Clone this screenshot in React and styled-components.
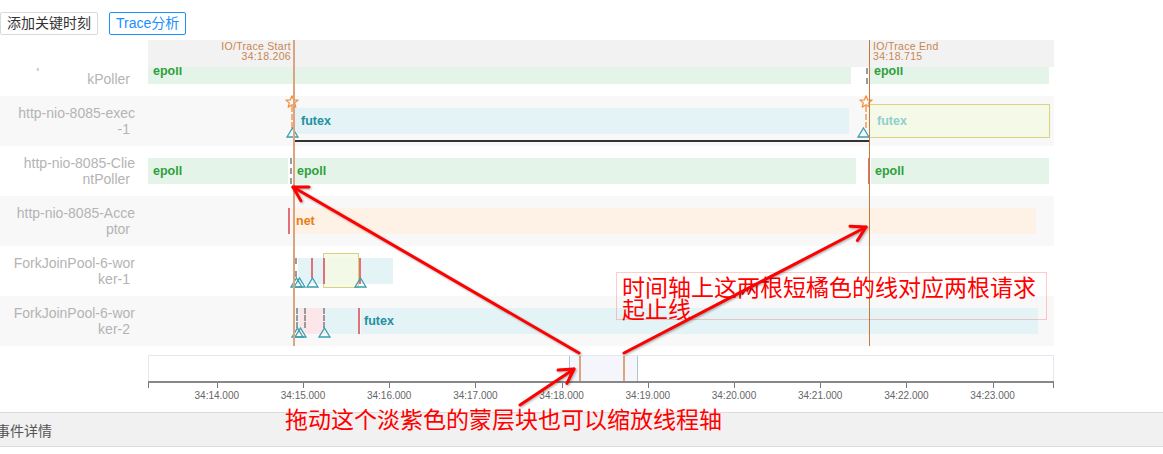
import React from "react";
import styled, { createGlobalStyle } from "styled-components";

const PLOT_X = 148;
const SEC_PX = 86.2;
const T14_X = 216.8; // x of 34:14.000

const GlobalStyle = createGlobalStyle`
  body {
    margin: 0;
    background: #fff;
    font-family: "Liberation Sans", "Noto Sans CJK SC", sans-serif;
  }
`;

const Page = styled.div`
  position: relative;
  width: 1163px;
  height: 454px;
  overflow: hidden;
`;

const Toolbar = styled.div`
  display: flex;
  gap: 11px;
  padding: 12px 0 5px;
`;

const ToolButton = styled.button`
  height: 23px;
  padding: 0 6px;
  border: 1px solid ${(p) => (p.$primary ? "#1890ff" : "#d9d9d9")};
  border-radius: 2px;
  background: #fff;
  color: ${(p) => (p.$primary ? "#1890ff" : "#333")};
  font-family: inherit;
  font-size: 14px;
  line-height: 21px;
`;

const Chart = styled.div`
  position: relative;
  height: 306px;
  overflow: hidden;
`;

const ChartHeader = styled.div`
  position: absolute;
  top: 0;
  left: 0;
  z-index: 2;
  display: flex;
  align-items: flex-start;
`;

const HeaderCorner = styled.div`
  width: 148px;
  height: 28px;
  background: #fff;
`;

const HeaderBand = styled.div`
  width: 906px;
  height: 27px;
  background: #f2f2f2;
`;

const RowList = styled.div`
  padding-top: 6px;
`;

const Row = styled.div`
  display: flex;
  width: 1054px;
  height: 50px;
  background: ${(p) => (p.$striped ? "#f8f8f8" : "#fff")};
`;

const RowLabel = styled.div`
  width: 148px;
  box-sizing: border-box;
  padding-right: 13px;
  display: flex;
  flex-direction: column;
  justify-content: center;
  align-items: flex-end;
  font-size: 14px;
  line-height: 16px;
  color: #b4b4b4;
  white-space: nowrap;
`;

const LabelLine = styled.span`
  padding-right: ${(p) => (p.$tail ? "5px" : "0")};
`;

const Track = styled.div`
  position: relative;
  flex: 1;
`;

const tones = {
  green: { bg: "#e5f4e9", fg: "#2f9f3d" },
  cyan: { bg: "#e4f3f5", fg: "#22909f" },
  peach: { bg: "#fef1e6", fg: "#ea7d12" },
  pink: { bg: "#fde6e9", fg: "#e06070" },
};

const Bar = styled.div`
  position: absolute;
  top: 12px;
  height: 26px;
  box-sizing: border-box;
  padding-left: ${(p) => p.$pad ?? 5}px;
  background: ${(p) => tones[p.$tone].bg};
  color: ${(p) => tones[p.$tone].fg};
  font-size: 12.5px;
  font-weight: bold;
  line-height: 26px;
  white-space: nowrap;
  overflow: hidden;
`;

const HighlightBox = styled.div`
  position: absolute;
  box-sizing: border-box;
  border: 1.5px solid #dbd27c;
  background: rgba(244, 249, 228, 0.85);
  color: #8fcfcf;
  font-size: 12.5px;
  font-weight: bold;
  padding-left: 7px;
  display: flex;
  align-items: center;
`;

const DashLine = styled.div`
  position: absolute;
  width: 0;
  border-left: 2px dashed ${(p) => (p.$tone === "orange" ? "#f4b17c" : "#9a9a9a")};
`;

const RedMark = styled.div`
  position: absolute;
  width: 2px;
  background: #e2707b;
`;

const SpanLine = styled.div`
  position: absolute;
  top: 44px;
  height: 2px;
  background: #333;
`;

const GlyphSvg = styled.svg`
  position: absolute;
  overflow: visible;
`;

const TraceLine = styled.div`
  position: absolute;
  top: 0;
  bottom: 0;
  z-index: 3;
  width: ${(p) => (p.$end ? "1.5px" : "2px")};
  background: ${(p) => (p.$end ? "#c8773d" : "#dca47f")};
`;

const TraceLabel = styled.div`
  position: absolute;
  top: 1px;
  z-index: 3;
  font-size: 10.5px;
  line-height: 10px;
  letter-spacing: 0.3px;
  color: #c98550;
  text-align: ${(p) => (p.$end ? "left" : "right")};
  white-space: nowrap;
`;

const BrushArea = styled.div`
  position: relative;
  margin: 9px 0 0 ${PLOT_X}px;
  width: 906px;
  height: 26px;
  box-sizing: border-box;
  border: 1px solid #e4e8f1;
  border-bottom: none;
`;

const BrushSelection = styled.div`
  position: absolute;
  top: 0;
  bottom: 0;
  box-sizing: border-box;
  background: #f4f6fc;
  border-left: 1px solid #b3c1d8;
  border-right: 1px solid #b3c1d8;
`;

const BrushMark = styled.div`
  position: absolute;
  top: 0;
  bottom: 0;
  width: 2px;
  background: #dca47f;
`;

const Axis = styled.div`
  position: relative;
  margin-left: ${PLOT_X}px;
  width: 906px;
  height: 22px;
  border-top: 2px solid #888;
`;

const Tick = styled.div`
  position: absolute;
  top: 0;
  width: 1px;
  height: 5px;
  background: #777;
`;

const TickLabel = styled.div`
  position: absolute;
  top: 7px;
  transform: translateX(-50%);
  font-size: 10px;
  color: #666;
  white-space: nowrap;
`;

const DetailBar = styled.div`
  margin-top: 7px;
  height: 35px;
  box-sizing: border-box;
  border-top: 1px solid #dcdcdc;
  border-bottom: 1px solid #dcdcdc;
  background: #f1f1f1;
  display: flex;
  align-items: center;
  text-indent: -4px;
  font-size: 14px;
  color: #555;
`;

const ArrowLayer = styled.svg`
  position: absolute;
  top: 0;
  left: 0;
  z-index: 10;
  pointer-events: none;
  filter: drop-shadow(1px 1px 1px rgba(0, 0, 0, 0.35));
`;

const Callout = styled.div`
  position: absolute;
  z-index: 10;
  left: 616px;
  top: 272px;
  width: 431px;
  height: 48px;
  box-sizing: border-box;
  padding: 2px 5px;
  border: 1px solid rgba(255, 0, 0, 0.2);
  color: #ff0000;
  font-family: "Noto Sans CJK SC", sans-serif;
  font-size: 23px;
  line-height: 22px;
`;

const Note = styled.div`
  position: absolute;
  z-index: 10;
  left: 285px;
  top: 405px;
  color: #ff0000;
  font-family: "Noto Sans CJK SC", sans-serif;
  font-size: 23px;
  line-height: 26px;
  white-space: nowrap;
`;

const px = (x) => x - PLOT_X;

const Triangle = ({ x }) => (
  <GlyphSvg width="13" height="11" style={{ left: px(x) - 6.5, top: 31 }}>
    <polygon points="6.5,1 12,10 1,10" fill="none" stroke="#3a9db0" strokeWidth="1.3" />
  </GlyphSvg>
);

const Star = ({ x }) => (
  <GlyphSvg width="14" height="13" style={{ left: px(x) - 7, top: -1 }}>
    <polygon
      points="7,0.8 8.7,4.9 13.1,5.1 9.7,7.9 10.8,12.2 7,9.8 3.2,12.2 4.3,7.9 0.9,5.1 5.3,4.9"
      fill="none"
      stroke="#f08d35"
      strokeWidth="1.2"
      strokeLinejoin="round"
    />
  </GlyphSvg>
);

const bar = (x1, x2, tone, text, pad) => ({ kind: "bar", x1, x2, tone, text, pad });
const dash = (x, tone = "gray", top = 12, bottom = 38) => ({ kind: "dash", x, tone, top, bottom });
const red = (x, top = 12, bottom = 38) => ({ kind: "red", x, top, bottom });
const tri = (x) => ({ kind: "tri", x });
const star = (x) => ({ kind: "star", x });

const rows = [
  {
    lines: ["http-nio-8085-Bloc", "kPoller"],
    items: [bar(148, 851, "green", "epoll"), dash(867), bar(870, 1049, "green", "epoll", 4)],
  },
  {
    lines: ["http-nio-8085-exec", "-1"],
    striped: true,
    items: [
      bar(295, 849, "cyan", "futex", 6),
      { kind: "span", x1: 293, x2: 869 },
      dash(292, "orange", 10, 32),
      star(292),
      tri(292),
      dash(866, "orange", 10, 32),
      star(866),
      tri(863),
      { kind: "box", x1: 869, x2: 1050, top: 8, bottom: 42, text: "futex" },
    ],
  },
  {
    lines: ["http-nio-8085-Clie", "ntPoller"],
    items: [
      bar(148, 288, "green", "epoll"),
      dash(291),
      bar(293, 856, "green", "epoll", 4),
      bar(871, 1049, "green", "epoll", 4),
      red(869),
    ],
  },
  {
    lines: ["http-nio-8085-Acce", "ptor"],
    striped: true,
    items: [red(289), bar(292, 1036, "peach", "net", 4)],
  },
  {
    lines: ["ForkJoinPool-6-wor", "ker-1"],
    items: [
      bar(298, 393, "cyan"),
      { kind: "box", x1: 323, x2: 359, top: 7, bottom: 42 },
      dash(296, "gray", 12, 31),
      red(312, 12, 32),
      red(323.5),
      red(359.5),
      tri(296),
      tri(299),
      tri(312),
      tri(360),
    ],
  },
  {
    lines: ["ForkJoinPool-6-wor", "ker-2"],
    striped: true,
    items: [
      bar(297, 300, "cyan"),
      bar(300, 325, "pink"),
      bar(325, 359, "cyan"),
      bar(361, 1038, "cyan", "futex", 3),
      dash(297, "gray", 12, 32),
      dash(305, "gray", 12, 32),
      dash(324, "gray", 12, 32),
      red(359),
      tri(297),
      tri(300),
      tri(324),
    ],
  },
];

const TrackItem = ({ item }) => {
  switch (item.kind) {
    case "bar":
      return (
        <Bar $tone={item.tone} $pad={item.pad} style={{ left: px(item.x1), width: item.x2 - item.x1 }}>
          {item.text}
        </Bar>
      );
    case "box":
      return (
        <HighlightBox
          style={{ left: px(item.x1), width: item.x2 - item.x1, top: item.top, height: item.bottom - item.top }}
        >
          {item.text}
        </HighlightBox>
      );
    case "dash":
      return (
        <DashLine $tone={item.tone} style={{ left: px(item.x) - 1, top: item.top, height: item.bottom - item.top }} />
      );
    case "red":
      return <RedMark style={{ left: px(item.x) - 1, top: item.top, height: item.bottom - item.top }} />;
    case "span":
      return <SpanLine style={{ left: px(item.x1), width: item.x2 - item.x1 }} />;
    case "tri":
      return <Triangle x={item.x} />;
    case "star":
      return <Star x={item.x} />;
    default:
      return null;
  }
};

const ticks = [14, 15, 16, 17, 18, 19, 20, 21, 22, 23];
const tickX = (s) => T14_X + (s - 14) * SEC_PX - PLOT_X;

const arrows = [
  { from: [579, 353], to: [293, 187] },
  { from: [624, 353], to: [866, 227] },
  { from: [520, 405], to: [574, 369] },
];

const Arrow = ({ from, to }) => {
  const ang = Math.atan2(to[1] - from[1], to[0] - from[0]);
  const len = 16;
  const spread = Math.PI / 6;
  const a1 = [to[0] - len * Math.cos(ang - spread), to[1] - len * Math.sin(ang - spread)];
  const a2 = [to[0] - len * Math.cos(ang + spread), to[1] - len * Math.sin(ang + spread)];
  return (
    <g stroke="#ff0000" strokeWidth="3" strokeLinecap="round" strokeLinejoin="round" fill="none">
      <line x1={from[0]} y1={from[1]} x2={to[0]} y2={to[1]} />
      <polyline points={`${a1[0]},${a1[1]} ${to[0]},${to[1]} ${a2[0]},${a2[1]}`} />
    </g>
  );
};

const App = () => {
  return (
    <Page>
      <GlobalStyle />
      <Toolbar>
        <ToolButton>添加关键时刻</ToolButton>
        <ToolButton $primary>Trace分析</ToolButton>
      </Toolbar>

      <Chart>
        <ChartHeader>
          <HeaderCorner />
          <HeaderBand />
        </ChartHeader>
        <TraceLabel style={{ right: 1163 - 291 }}>
          IO/Trace Start
          <br />
          34:18.206
        </TraceLabel>
        <TraceLabel $end style={{ left: 873 }}>
          IO/Trace End
          <br />
          34:18.715
        </TraceLabel>
        <TraceLine style={{ left: 292.5 }} />
        <TraceLine $end style={{ left: 868.5 }} />

        <RowList>
          {rows.map((row, i) => (
            <Row key={i} $striped={row.striped}>
              <RowLabel>
                <LabelLine>{row.lines[0]}</LabelLine>
                <LabelLine $tail>{row.lines[1]}</LabelLine>
              </RowLabel>
              <Track>
                {row.items.map((item, j) => (
                  <TrackItem key={j} item={item} />
                ))}
              </Track>
            </Row>
          ))}
        </RowList>
      </Chart>

      <BrushArea>
        <BrushSelection style={{ left: 567.5 - PLOT_X, width: 637 - 567.5 }} />
        <BrushMark style={{ left: 578 - PLOT_X }} />
        <BrushMark style={{ left: 622 - PLOT_X }} />
      </BrushArea>
      <Axis>
        <Tick style={{ left: 0 }} />
        <Tick style={{ left: 905 }} />
        {ticks.map((s) => (
          <React.Fragment key={s}>
            <Tick style={{ left: tickX(s) }} />
            <TickLabel style={{ left: tickX(s) }}>{`34:${s}.000`}</TickLabel>
          </React.Fragment>
        ))}
      </Axis>

      <DetailBar>事件详情</DetailBar>

      <Callout>
        时间轴上这两根短橘色的线对应两根请求
        <br />
        起止线
      </Callout>
      <Note>拖动这个淡紫色的蒙层块也可以缩放线程轴</Note>
      <ArrowLayer width="1163" height="454">
        {arrows.map((a, i) => (
          <Arrow key={i} from={a.from} to={a.to} />
        ))}
      </ArrowLayer>
    </Page>
  );
};

export default App;
